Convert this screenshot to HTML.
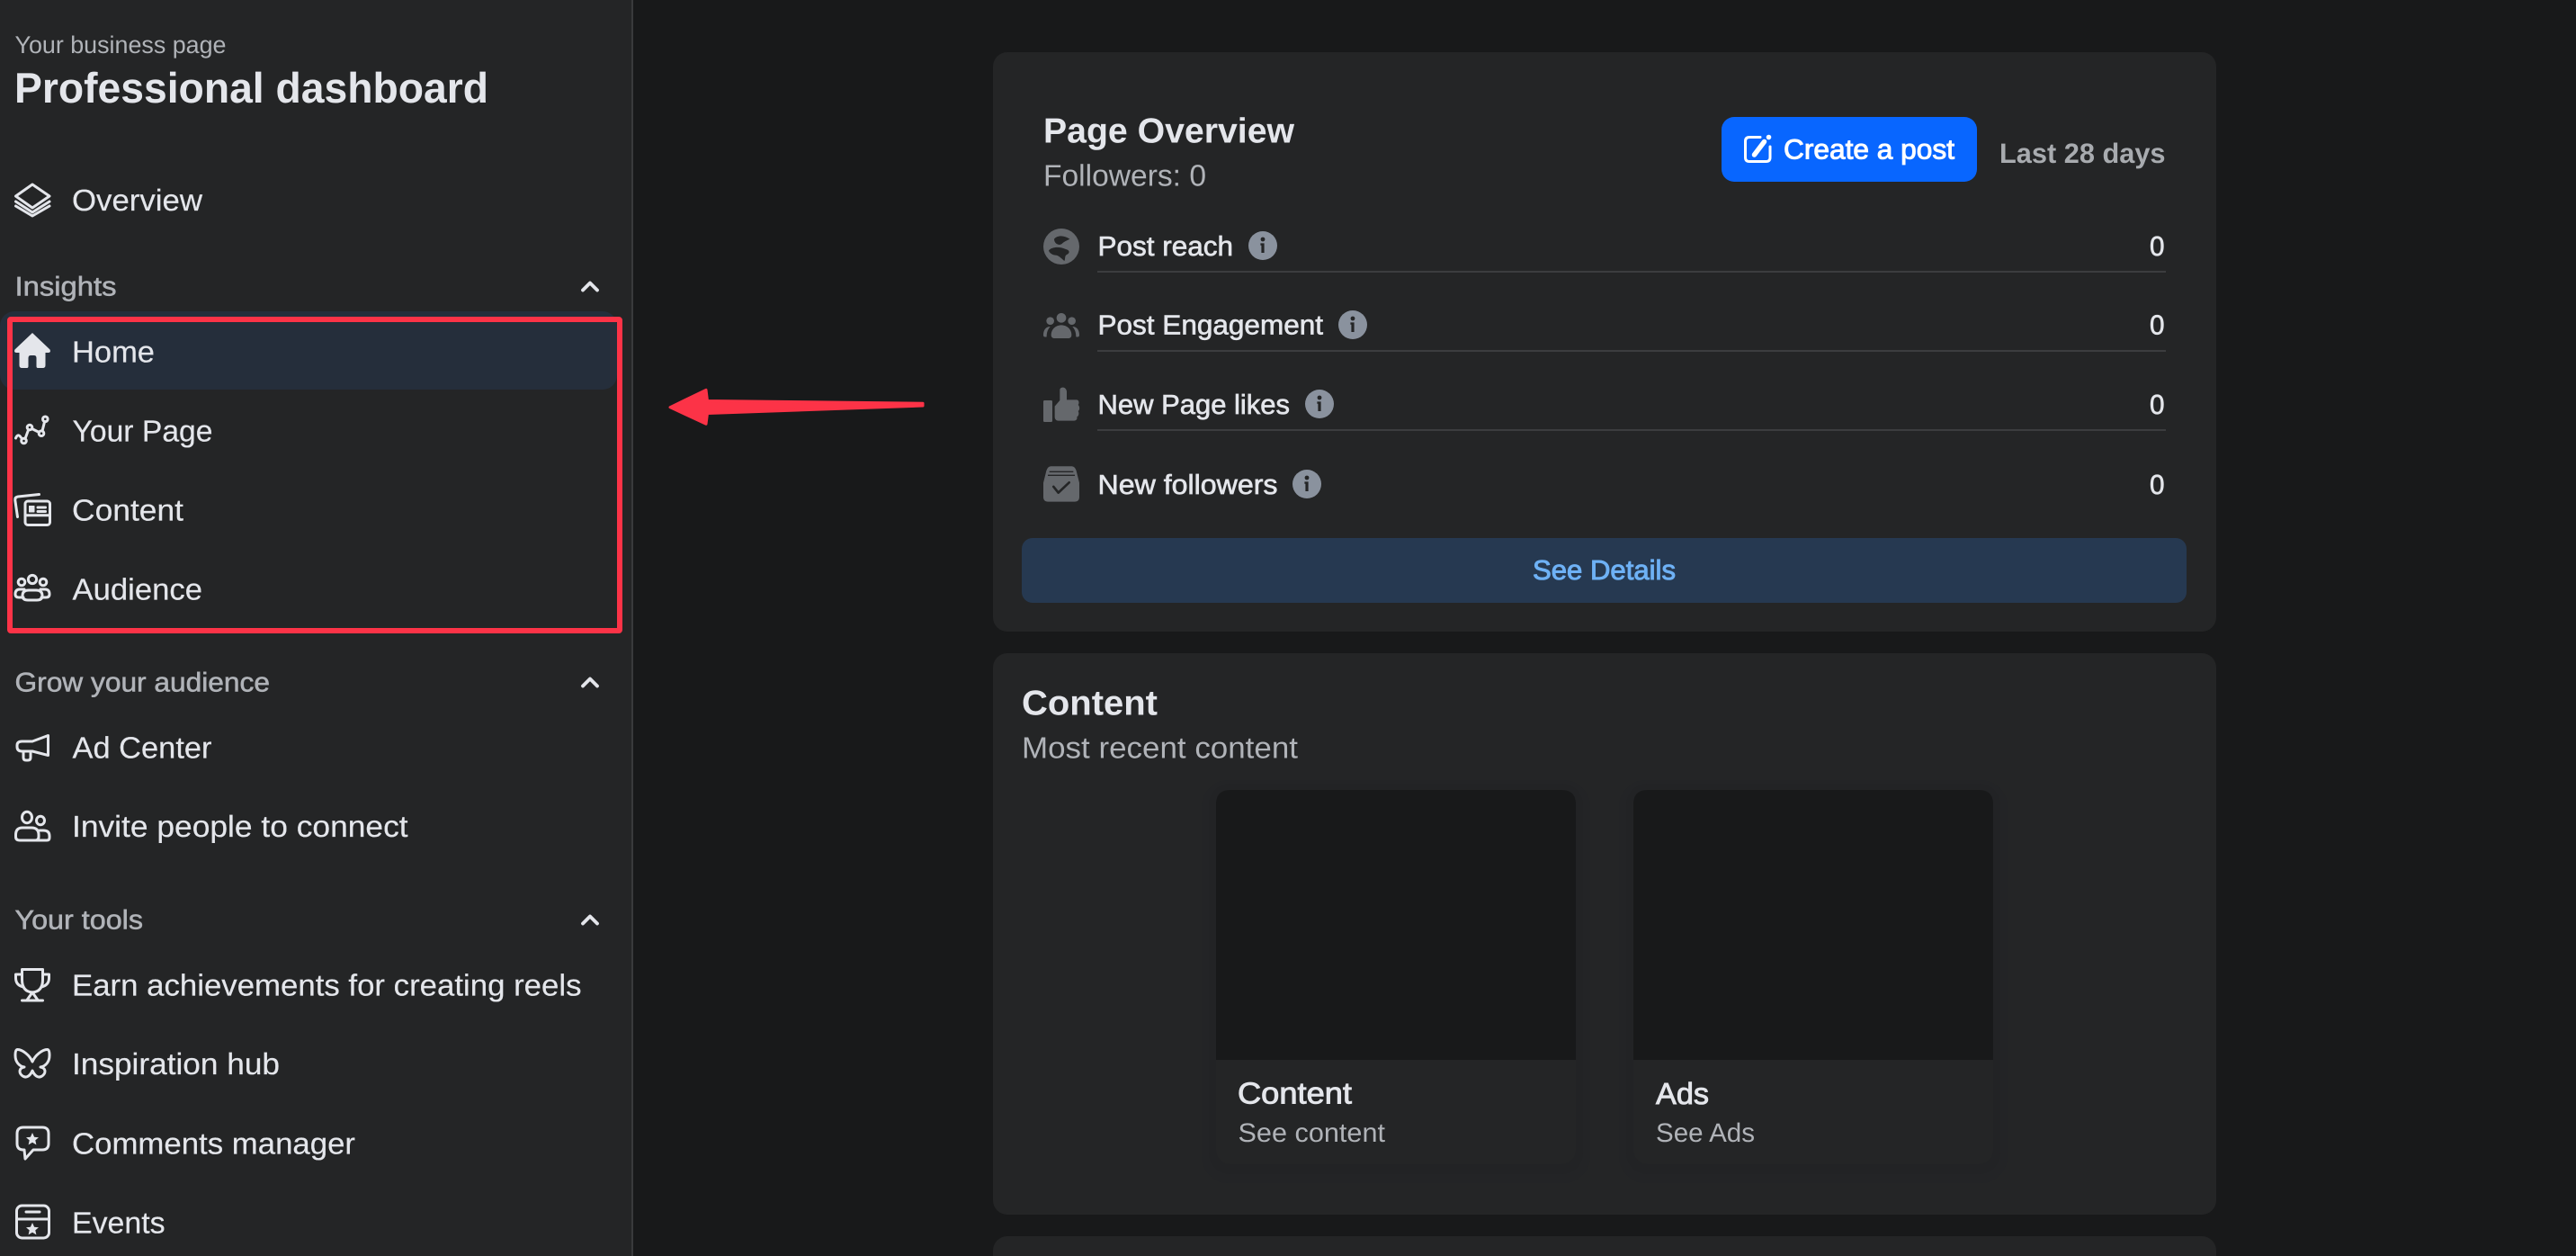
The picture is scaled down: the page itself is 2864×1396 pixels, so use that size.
<!DOCTYPE html>
<html lang="en">
<head>
<meta charset="utf-8">
<title>Professional dashboard</title>
<style>
html,body{margin:0;padding:0;width:2864px;height:1396px;overflow:hidden;background:#18191a}
svg{display:block}
text{font-family:"Liberation Sans",Arial,sans-serif;text-rendering:geometricPrecision;white-space:pre}
.nav{font-size:33.5px;fill:#e4e6eb;stroke:#e4e6eb;stroke-width:.2}
.sec{font-size:30px;fill:#b0b3b8;stroke:#b0b3b8;stroke-width:.55}
.lab{font-size:30.5px;fill:#e4e6eb;stroke:#e4e6eb;stroke-width:.65}
.sub{fill:#b0b3b8}
.b{font-weight:700}
.semi{fill:#e4e6eb;stroke:#e4e6eb;stroke-width:.9}
.ico{fill:none;stroke:#e4e6eb;stroke-width:3;stroke-linecap:round;stroke-linejoin:round}
.chev{fill:none;stroke:#e4e6eb;stroke-width:3.8;stroke-linecap:round;stroke-linejoin:round}
</style>
</head>
<body>
<svg xmlns="http://www.w3.org/2000/svg" width="2864" height="1396" viewBox="0 0 2864 1396">
<defs>
<g id="info"><circle r="16" fill="#8a929e"/><circle cy="-7" r="2.4" fill="#242526"/><path d="M-2.6-2.6H1.600V8H-1.600V-.2H-2.600Z" fill="#242526"/></g>
<path id="star" d="M0-7 2.100-2.300 7-1.800 3.300 1.400 4.400 6.400 0 3.800-4.400 6.400-3.300 1.400-7-1.800-2.100-2.300Z" fill="#e4e6eb"/>
</defs>

<rect width="2864" height="1396" fill="#18191a"/>

<!-- sidebar -->
<rect width="702" height="1396" fill="#242526"/>
<rect x="702" width="2" height="1396" fill="#393a3c"/>
<rect x="0" y="346" width="686" height="87" rx="16" fill="#252e3b"/>

<text x="16.500" y="59" font-size="27" class="sub" textLength="235" lengthAdjust="spacingAndGlyphs">Your business page</text>
<text x="16" y="114" font-size="47.500" fill="#e4e6eb" class="b" textLength="527" lengthAdjust="spacingAndGlyphs">Professional dashboard</text>

<text x="80" y="234" class="nav" textLength="145" lengthAdjust="spacingAndGlyphs">Overview</text>
<text x="16.500" y="328.500" class="sec" textLength="113" lengthAdjust="spacingAndGlyphs">Insights</text>
<text x="80" y="402.700" class="nav" textLength="92" lengthAdjust="spacingAndGlyphs">Home</text>
<text x="80.500" y="490.300" class="nav" textLength="156" lengthAdjust="spacingAndGlyphs">Your Page</text>
<text x="80" y="578.500" class="nav" textLength="124" lengthAdjust="spacingAndGlyphs">Content</text>
<text x="80.500" y="666.300" class="nav" textLength="144.500" lengthAdjust="spacingAndGlyphs">Audience</text>
<text x="16.500" y="768.700" class="sec" textLength="283.500" lengthAdjust="spacingAndGlyphs">Grow your audience</text>
<text x="80.500" y="842.700" class="nav" textLength="155" lengthAdjust="spacingAndGlyphs">Ad Center</text>
<text x="80" y="930" class="nav" textLength="373.600" lengthAdjust="spacingAndGlyphs">Invite people to connect</text>
<text x="16.500" y="1032.300" class="sec" textLength="142.500" lengthAdjust="spacingAndGlyphs">Your tools</text>
<text x="80" y="1106.700" class="nav" textLength="566.500" lengthAdjust="spacingAndGlyphs">Earn achievements for creating reels</text>
<text x="80" y="1194" class="nav" textLength="231" lengthAdjust="spacingAndGlyphs">Inspiration hub</text>
<text x="80" y="1282.500" class="nav" textLength="315" lengthAdjust="spacingAndGlyphs">Comments manager</text>
<text x="80" y="1370.300" class="nav" textLength="103.600" lengthAdjust="spacingAndGlyphs">Events</text>

<!-- chevrons -->
<path class="chev" d="M648 322.500 656 314.500 664 322.500"/>
<path class="chev" d="M648 762.500 656 754.500 664 762.500"/>
<path class="chev" d="M648 1026.500 656 1018.500 664 1026.500"/>

<!-- overview icon -->
<path class="ico" stroke-width="2.800" d="M36 205 55 218 36 231 17.500 218Z"/>
<path class="ico" stroke-width="2.800" d="M17.500 224 36 236 55 224"/>
<path class="ico" stroke-width="2.800" d="M17.500 229 36 240 55 229"/>
<!-- home -->
<path fill="#e4e6eb" d="M36 370 55.500 388.500Q57 392 53.500 392H50.500V406Q50.500 409 47.500 409H42Q40.500 409 40.500 407V398Q40.500 395 38 395H34Q31.500 395 31.500 398V407Q31.500 409 30 409H24.500Q21.500 409 21.500 406V392H18.500Q15 392 16.500 388.500Z"/>
<!-- your page -->
<g class="ico" stroke-width="2.400"><path d="M17.500 487Q20 481 23.500 486.500"/><circle cx="26.500" cy="490" r="2.800"/><path d="M28 487.500 31.500 478"/><circle cx="33" cy="475" r="2.800"/><path d="M35.500 476.500 43.500 480.500"/><circle cx="46" cy="481.700" r="2.800"/><path d="M47 479 49.500 469"/><circle cx="50.300" cy="465.800" r="2.800"/></g>
<!-- content -->
<g class="ico" stroke-width="2.800"><path d="M19.500 574.500 16.800 556Q16.500 552.500 20 552L43.500 549.500"/><rect x="28" y="557" width="27.500" height="26.500" rx="3"/><path d="M28 572.800H55.500"/><path d="M42 564H50.500M42 568.500H50.500"/><rect x="32.500" y="562.500" width="5.500" height="6.500" fill="#e4e6eb" stroke-width="1"/></g>
<!-- audience -->
<g class="ico" stroke-width="2.700"><circle cx="24" cy="647" r="3.800"/><circle cx="36" cy="644" r="4.600"/><circle cx="48" cy="647" r="3.800"/><path d="M26 664H21Q17 664 17 660.500 17 655 22 655H27M46 664H51Q55 664 55 660.500 55 655 50 655H45"/><path d="M32 656H40Q47 656 47 662 47 667 41 667H31Q25 667 25 662 25 656 32 656Z"/></g>
<!-- ad center -->
<g class="ico" stroke-width="2.800"><path d="M53.500 817.500V839.500L36 835H24.500Q19 835 19 830V828.500Q19 824 24.500 824H36Z"/><path d="M26 836V842Q26 845 29 845H31Q34 845 34 842V836"/></g>
<!-- invite -->
<g class="ico" stroke-width="2.800"><ellipse cx="30" cy="908.500" rx="5.500" ry="6.200"/><ellipse cx="45" cy="912" rx="4.500" ry="4.800"/><path d="M22 934Q17.500 934 17.500 930V928Q17.500 920 25 920H35Q43 920 43 928V930Q43 934 39 934Z"/><path d="M44 923H48Q55 923 55 929V931Q55 934 52 934H40"/></g>
<!-- trophy -->
<g class="ico" stroke-width="2.800"><path d="M24.500 1077.500H47.500V1089Q47.500 1102 36 1103 24.500 1102 24.500 1089Z"/><path d="M24.500 1083H17.500V1087Q17.500 1095 26 1097M47.500 1083H54.500V1087Q54.500 1095 46 1097"/><path d="M36 1103 30 1111.500M36 1103 42 1111.500M24.500 1112H47.500"/></g>
<!-- butterfly -->
<path class="ico" stroke-width="2.800" d="M36 1180C33 1173 25 1166.500 19.500 1166.500 17.500 1166.500 17 1169 17 1173 17 1180 21 1185 27 1186 21 1187 21 1192 24 1195 28 1199 33 1197 36 1190 39 1197 44 1199 48 1195 51 1192 51 1187 45 1186 51 1185 55 1180 55 1173 55 1169 54.500 1166.500 52.500 1166.500 47 1166.500 39 1173 36 1180Z"/>
<!-- comments -->
<path class="ico" stroke-width="2.800" d="M26 1253H47Q54 1253 54 1260V1271Q54 1278 47 1278H37L28 1288 27 1278H26Q19 1278 19 1271V1260Q19 1253 26 1253Z"/>
<use href="#star" x="36" y="1266"/>
<!-- events -->
<g class="ico" stroke-width="2.800"><rect x="18.500" y="1340" width="36" height="36" rx="6"/><path d="M18.500 1355H54.500M29 1347H44"/></g>
<use href="#star" x="36" y="1366"/>

<!-- red annotation -->
<rect x="11" y="355" width="678" height="346" rx="1" fill="none" stroke="#fc3347" stroke-width="6"/>
<path d="M745 452.700 785 433.300 786.500 445.500 1026 448.200 1026 451 786.500 459.500 785 471.300Z" fill="#fc3347" stroke="#fc3347" stroke-width="3" stroke-linejoin="round"/>

<!-- card 1 -->
<rect x="1104" y="58" width="1360" height="644" rx="16" fill="#242526"/>
<text x="1160" y="158.300" font-size="39" fill="#e4e6eb" class="b" textLength="279" lengthAdjust="spacingAndGlyphs">Page Overview</text>
<text x="1160" y="206.700" font-size="33.500" class="sub" textLength="181" lengthAdjust="spacingAndGlyphs">Followers: 0</text>

<rect x="1914" y="130" width="284" height="72" rx="14" fill="#0866ff"/>
<g fill="none" stroke="#fff" stroke-linecap="round" stroke-linejoin="round"><path stroke-width="3" d="M1957 152.500H1945Q1940.500 152.500 1940.500 157V175Q1940.500 179.500 1945 179.500H1963.500Q1968 179.500 1968 175V163"/><path stroke-width="5.500" d="M1950.500 172 1961.500 157.500"/></g>
<circle cx="1966.500" cy="152.500" r="2.800" fill="#fff"/>
<text x="1983" y="176.700" font-size="31" fill="#fff" stroke="#fff" stroke-width=".95" textLength="190" lengthAdjust="spacingAndGlyphs">Create a post</text>
<text x="2223" y="181" font-size="31" fill="#a8abaf" class="b" textLength="184.500" lengthAdjust="spacingAndGlyphs">Last 28 days</text>

<!-- rows -->
<g transform="translate(1150 245) scale(.3333)"><circle cx="90" cy="87" r="60" fill="#65686c"/><path fill="#242526" d="M66 62C78 48 100 50 118 62 108 68 100 70 92 78 80 86 66 76 66 62ZM48 100C60 87 85 87 105 96 120 100 118 110 108 114 100 118 104 130 100 135 88 125 80 116 70 116 58 114 50 108 48 100Z"/></g>
<text x="1220.500" y="284" class="lab" textLength="150.500" lengthAdjust="spacingAndGlyphs">Post reach</text>
<use href="#info" x="1404" y="273"/>
<text x="2390" y="284" class="lab" textLength="16.500" lengthAdjust="spacingAndGlyphs">0</text>
<rect x="1220" y="301" width="1188" height="2" fill="#3c3d3f"/>

<g transform="translate(1150 245) scale(.3333)" fill="#65686c"><circle cx="90" cy="325" r="16"/><circle cx="53" cy="335" r="13"/><circle cx="125" cy="335" r="13"/><path d="M56 382C56 362 72 349 90 349 108 349 124 362 124 382 124 390 118 393 112 393H68C62 393 56 390 56 382Z"/><path d="M30 382C30 366 38 354 53 354 44 364 41 375 41 388 33 390 30 387 30 382ZM150 382C150 366 142 354 127 354 136 364 139 375 139 388 147 390 150 387 150 382Z"/></g>
<text x="1220.500" y="371.700" class="lab" textLength="250.500" lengthAdjust="spacingAndGlyphs">Post Engagement</text>
<use href="#info" x="1504" y="361"/>
<text x="2390" y="371.700" class="lab" textLength="16.500" lengthAdjust="spacingAndGlyphs">0</text>
<rect x="1220" y="389" width="1188" height="2" fill="#3c3d3f"/>

<g transform="translate(1150 245) scale(.3333)" fill="#65686c"><rect x="30" y="600" width="30" height="72" rx="4"/><path d="M68 620 85 600V565C85 555 105 552 108 570V598H140C150 598 150 610 146 615 152 620 152 632 146 636 150 642 148 652 142 655 144 662 140 668 132 668H80C72 668 68 662 68 655Z"/></g>
<text x="1220.500" y="460" class="lab" textLength="213.500" lengthAdjust="spacingAndGlyphs">New Page likes</text>
<use href="#info" x="1467" y="449"/>
<text x="2390" y="460" class="lab" textLength="16.500" lengthAdjust="spacingAndGlyphs">0</text>
<rect x="1220" y="477" width="1188" height="2" fill="#3c3d3f"/>

<g transform="translate(1150 245) scale(.3333)"><path fill="#65686c" d="M55 820H125Q135 820 140 835L150 875V922Q150 938 134 938H46Q30 938 30 922V875L40 835Q45 820 55 820Z"/><path fill="none" stroke="#242526" stroke-width="4" d="M50 838H130M45 850H135"/><path fill="none" stroke="#242526" stroke-width="8" stroke-linecap="round" stroke-linejoin="round" d="M64 888 80 908 116 874"/></g>
<text x="1220.500" y="549" class="lab" textLength="200" lengthAdjust="spacingAndGlyphs">New followers</text>
<use href="#info" x="1453" y="538"/>
<text x="2390" y="549" class="lab" textLength="16.500" lengthAdjust="spacingAndGlyphs">0</text>

<rect x="1136" y="598" width="1295" height="72" rx="12" fill="#263951"/>
<text x="1704" y="644" font-size="30.500" fill="#6eb1f5" stroke="#6eb1f5" stroke-width=".95" textLength="159" lengthAdjust="spacingAndGlyphs">See Details</text>

<!-- card 2 -->
<rect x="1104" y="726" width="1360" height="624" rx="16" fill="#242526"/>
<text x="1136" y="794.700" font-size="39" fill="#e4e6eb" class="b" textLength="151" lengthAdjust="spacingAndGlyphs">Content</text>
<text x="1136" y="842.700" font-size="33.500" class="sub" textLength="307" lengthAdjust="spacingAndGlyphs">Most recent content</text>

<rect x="1336" y="867" width="432" height="448" rx="30" fill="#232426"/>
<rect x="1344" y="871" width="416" height="434" rx="24" fill="#222325"/>
<rect x="1352" y="878" width="400" height="416" rx="16" fill="#242526"/>
<path d="M1368 878H1736Q1752 878 1752 894V1178H1352V894Q1352 878 1368 878Z" fill="#18191a"/>
<text x="1376" y="1226.700" font-size="33.500" class="semi" textLength="127" lengthAdjust="spacingAndGlyphs">Content</text>
<text x="1376.500" y="1269" font-size="29.500" class="sub" textLength="163.500" lengthAdjust="spacingAndGlyphs">See content</text>

<rect x="1800" y="867" width="432" height="448" rx="30" fill="#232426"/>
<rect x="1808" y="871" width="416" height="434" rx="24" fill="#222325"/>
<rect x="1816" y="878" width="400" height="416" rx="16" fill="#242526"/>
<path d="M1832 878H2200Q2216 878 2216 894V1178H1816V894Q1816 878 1832 878Z" fill="#18191a"/>
<text x="1841" y="1227" font-size="33.500" class="semi" textLength="59" lengthAdjust="spacingAndGlyphs">Ads</text>
<text x="1841" y="1269" font-size="29.500" class="sub" textLength="110" lengthAdjust="spacingAndGlyphs">See Ads</text>

<!-- card 3 -->
<rect x="1104" y="1374" width="1360" height="80" rx="16" fill="#242526"/>
</svg>
</body>
</html>
